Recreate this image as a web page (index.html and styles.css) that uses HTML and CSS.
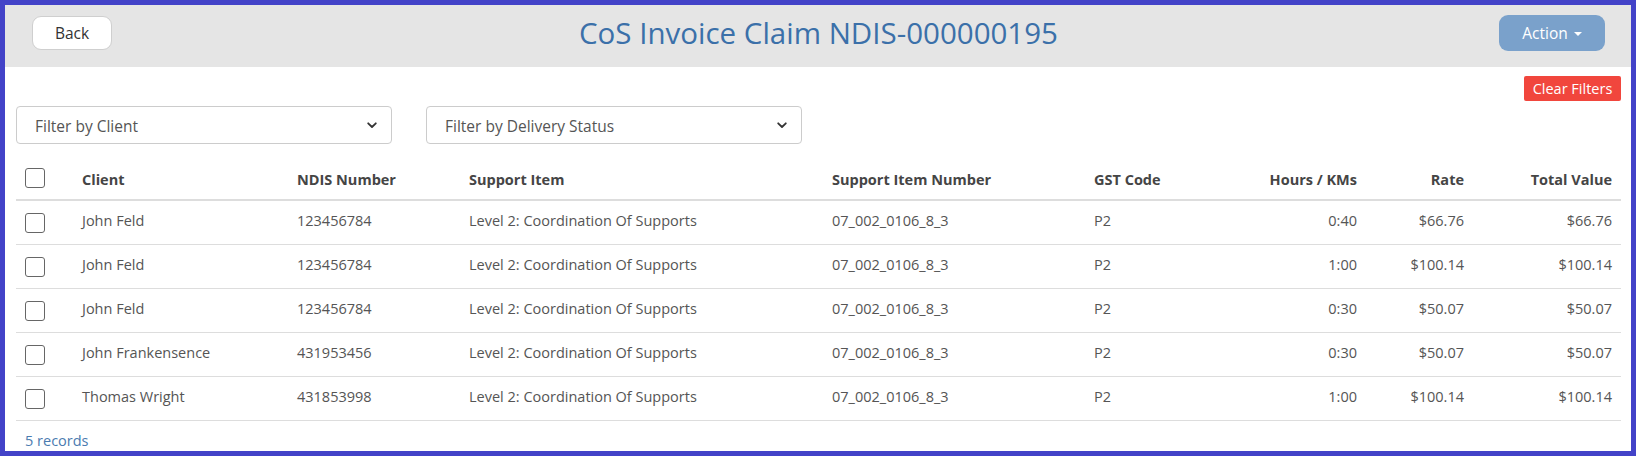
FILE: index.html
```html
<!DOCTYPE html>
<html lang="en">
<head>
<meta charset="utf-8">
<title>CoS Invoice Claim NDIS-000000195</title>
<link rel="stylesheet" href="styles.css">
</head>
<body>
<div class="frame">
  <header class="topbar">
    <div class="left"><button class="btn-back">Back</button></div>
    <h1 class="title">CoS Invoice Claim NDIS-000000195</h1>
    <div class="right"><button class="btn-action">Action <span class="caret"></span></button></div>
  </header>
  <main class="content">
    <div class="clear-row"><button class="btn-clear">Clear Filters</button></div>
    <div class="filters">
      <div class="select"><span>Filter by Client</span><svg class="chev" width="10" height="7" viewBox="0 0 10 7"><path d="M1.2 1.3 L5 5 L8.8 1.3" fill="none" stroke="#333" stroke-width="1.8" stroke-linecap="round" stroke-linejoin="round"/></svg></div>
      <div class="select"><span>Filter by Delivery Status</span><svg class="chev" width="10" height="7" viewBox="0 0 10 7"><path d="M1.2 1.3 L5 5 L8.8 1.3" fill="none" stroke="#333" stroke-width="1.8" stroke-linecap="round" stroke-linejoin="round"/></svg></div>
    </div>
    <table class="grid">
      <colgroup>
        <col class="c-check"><col class="c-client"><col class="c-ndis"><col class="c-item"><col class="c-itemno"><col class="c-gst"><col class="c-hours"><col class="c-rate"><col class="c-total">
      </colgroup>
      <thead>
        <tr>
          <th><span class="cb"></span></th>
          <th>Client</th>
          <th>NDIS Number</th>
          <th>Support Item</th>
          <th>Support Item Number</th>
          <th>GST Code</th>
          <th class="num">Hours / KMs</th>
          <th class="num">Rate</th>
          <th class="num">Total Value</th>
        </tr>
      </thead>
      <tbody>
        <tr><td><span class="cb"></span></td><td>John Feld</td><td>123456784</td><td>Level 2: Coordination Of Supports</td><td>07_002_0106_8_3</td><td>P2</td><td class="num">0:40</td><td class="num">$66.76</td><td class="num">$66.76</td></tr>
        <tr><td><span class="cb"></span></td><td>John Feld</td><td>123456784</td><td>Level 2: Coordination Of Supports</td><td>07_002_0106_8_3</td><td>P2</td><td class="num">1:00</td><td class="num">$100.14</td><td class="num">$100.14</td></tr>
        <tr><td><span class="cb"></span></td><td>John Feld</td><td>123456784</td><td>Level 2: Coordination Of Supports</td><td>07_002_0106_8_3</td><td>P2</td><td class="num">0:30</td><td class="num">$50.07</td><td class="num">$50.07</td></tr>
        <tr><td><span class="cb"></span></td><td>John Frankensence</td><td>431953456</td><td>Level 2: Coordination Of Supports</td><td>07_002_0106_8_3</td><td>P2</td><td class="num">0:30</td><td class="num">$50.07</td><td class="num">$50.07</td></tr>
        <tr><td><span class="cb"></span></td><td>Thomas Wright</td><td>431853998</td><td>Level 2: Coordination Of Supports</td><td>07_002_0106_8_3</td><td>P2</td><td class="num">1:00</td><td class="num">$100.14</td><td class="num">$100.14</td></tr>
      </tbody>
    </table>
    <div class="records">5 records</div>
  </main>
</div>
</body>
</html>
```
FILE: styles.css
```css
* { box-sizing: border-box; }
html, body { margin: 0; padding: 0; }
body {
  font-family: "Open Sans", "Liberation Sans", sans-serif;
  color: #555;
  background: #fff;
}
.frame {
  width: 1636px;
  height: 456px;
  border: 5px solid #4343c8;
  overflow: hidden;
  display: flex;
  flex-direction: column;
}
.topbar {
  height: 62px;
  background: #e5e5e5;
  display: grid;
  grid-template-columns: 1fr auto 1fr;
  align-items: start;
  padding: 10px 26px 0 27px;
}
.right { display: flex; justify-content: flex-end; }
.title {
  margin: -2px 0 0 0;
  font-weight: 400;
  font-size: 29.5px;
  line-height: 40px;
  color: #3b70a9;
}
.btn-back {
  width: 80px;
  height: 34px;
  margin-top: 1px;
  background: #fff;
  border: 1px solid #cfcfcf;
  border-radius: 9px;
  font-family: inherit;
  font-size: 15.5px;
  color: #333;
  padding: 0;
}
.btn-action {
  width: 106px;
  height: 36px;
  background: #7aa1cb;
  border: none;
  border-radius: 9px;
  color: #fff;
  font-family: inherit;
  font-size: 15.5px;
  padding: 0;
  display: flex;
  align-items: center;
  justify-content: center;
  gap: 6px;
}
.caret {
  width: 0; height: 0;
  border-left: 4px solid transparent;
  border-right: 4px solid transparent;
  border-top: 4px solid #fff;
  margin-top: 2px;
}
.content {
  padding: 0 10px 0 11px;
  display: flex;
  flex-direction: column;
}
.clear-row {
  display: flex;
  justify-content: flex-end;
  margin-top: 9px;
}
.btn-clear {
  height: 25px;
  width: 97px;
  background: #f1463d;
  color: #fff;
  border: none;
  border-radius: 2px;
  font-family: inherit;
  font-size: 14.5px;
  padding: 0;
  line-height: 25px;
}
.filters {
  display: flex;
  gap: 34px;
  margin-top: 5px;
}
.select {
  width: 376px;
  height: 38px;
  border: 1px solid #cccccc;
  border-radius: 4px;
  display: flex;
  align-items: center;
  justify-content: space-between;
  padding: 1px 14px 0 18px;
  font-size: 15.5px;
  color: #555;
}
.chev { display: block; }
.grid {
  margin-top: 14px;
  width: 1605px;
  border-collapse: collapse;
  table-layout: fixed;
  font-size: 14.5px;
}
.c-check { width: 57px; }
.c-client { width: 215px; }
.c-ndis { width: 172px; }
.c-item { width: 363px; }
.c-itemno { width: 262px; }
.c-gst { width: 150px; }
.c-hours { width: 131px; }
.c-rate { width: 107px; }
.c-total { width: 148px; }
.grid th, .grid td {
  text-align: left;
  padding: 0 9px;
  white-space: nowrap;
}
.grid th {
  height: 42px;
  padding-top: 2px;
  font-weight: 700;
  color: #454545;
  border-bottom: 2px solid #dddddd;
  vertical-align: middle;
}
.grid th .cb { margin-top: -3px; }
.grid td {
  height: 44px;
  padding-bottom: 3px;
  border-bottom: 1px solid #dddddd;
  color: #555;
  vertical-align: middle;
}
.grid .num { text-align: right; }
.cb {
  display: block;
  width: 20px;
  height: 20px;
  border: 1px solid #666;
  border-radius: 3px;
  background: #fff;
}
.grid td .cb { margin-top: 5px; }
.records {
  padding: 10px 0 0 9px;
  font-size: 14.5px;
  line-height: 20px;
  color: #4a7bb0;
}
```
